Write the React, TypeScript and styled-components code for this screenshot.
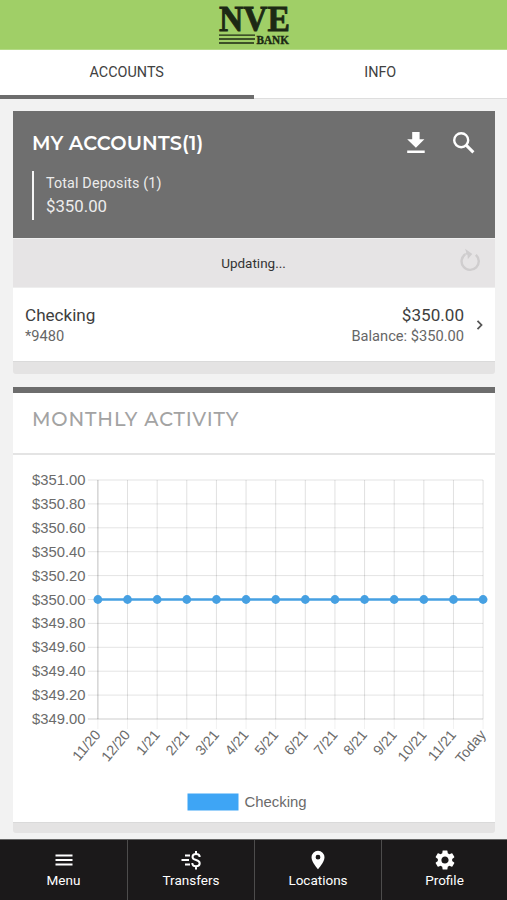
import React from "react";
import styled, { createGlobalStyle } from "styled-components";

const GlobalStyle = createGlobalStyle`
  * { box-sizing: border-box; }
  body { margin: 0; background: #f2f2f2; font-family: Roboto, sans-serif; color: #444; }
`;

const Page = styled.div`
  width: 507px;
  height: 900px;
  overflow: hidden;
  display: flex;
  flex-direction: column;
`;

const Brand = styled.header`
  height: 50px;
  flex: none;
  background: #a0cf67;
  border-bottom: 1px solid #b4da86;
  display: flex;
  justify-content: center;
`;

const LogoMark = styled.svg`
  overflow: visible;
  font-family: "Liberation Serif", serif;
  font-weight: 700;
`;

const Tabs = styled.nav`
  height: 49px;
  flex: none;
  display: flex;
  background: #fff;
`;

const Tab = styled.button<{ $active?: boolean }>`
  flex: 1;
  border: 0;
  padding: 0 0 ${(p) => (p.$active ? 0 : 3)}px;
  background: none;
  border-bottom: ${(p) => (p.$active ? "4px solid #6d6d6d" : "1px solid #dedede")};
  font: 400 14.4px Roboto, sans-serif;
  color: #414141;
`;

const Content = styled.main`
  flex: 1;
  padding: 12px 12px 0 13px;
`;

const Card = styled.section`
  display: flex;
  flex-direction: column;
`;

const Summary = styled.div`
  height: 127px;
  background: #6f6f6f;
  color: #fff;
  padding: 19px 19px 0;
`;

const SummaryTop = styled.div`
  display: flex;
  align-items: center;
  justify-content: space-between;
  height: 26px;
`;

const Title = styled.h2<{ $muted?: boolean }>`
  margin: 0;
  font: ${(p) => (p.$muted ? 500 : 600)} 19.4px/26px Montserrat, Inter, sans-serif;
  letter-spacing: ${(p) => (p.$muted ? "0.85px" : "0.15px")};
  color: ${(p) => (p.$muted ? "#a3a3a3" : "#fff")};
  white-space: nowrap;
`;

const Actions = styled.div`
  display: flex;
  gap: 20px;
  margin-right: -3px;
`;

const Deposits = styled.div`
  margin-top: 15px;
  height: 49px;
  border-left: 2.5px solid #f5f5f5;
  padding: 1px 0 0 12px;
`;

const DepositLabel = styled.div`
  font-size: 14.3px;
  line-height: 23px;
  letter-spacing: 0.15px;
  color: #ececec;
`;

const DepositValue = styled.div`
  font-size: 16.8px;
  line-height: 22px;
  color: #ececec;
`;

const Status = styled.div`
  height: 50px;
  background: #e6e4e5;
  display: grid;
  grid-template-columns: 50px 1fr 50px;
  align-items: center;
  justify-items: center;
  font-size: 13.5px;
  border-top: 1px solid #f0f0f0;
  border-bottom: 1px solid #eee;
  color: #333;
`;

const StatusText = styled.span`
  grid-column: 2;
  padding-right: 1px;
`;

const RefreshIcon = styled.svg`
  margin: -4px 0 0 -1px;
`;

const Account = styled.div`
  height: 73px;
  background: #fff;
  display: flex;
  align-items: flex-start;
  padding: 17px 10px 0 12px;
`;

const Lines = styled.div<{ $end?: boolean }>`
  margin-left: ${(p) => (p.$end ? "auto" : 0)};
  text-align: ${(p) => (p.$end ? "right" : "left")};
`;

const Primary = styled.div`
  font-size: 17.1px;
  line-height: 21px;
  color: #3e3e3e;
`;

const Secondary = styled.div`
  font-size: 14.65px;
  line-height: 21px;
  color: #666;
`;

const Chevron = styled.svg`
  margin: 14px 0 0 10px;
`;

const Foot = styled.div<{ $height: number }>`
  height: ${(p) => p.$height}px;
  background: #e4e3e3;
  border-top: 1px solid #dadada;
  border-radius: 0 0 3px 3px;
`;

const ActivityCard = styled(Card)`
  margin-top: 13px;
  border-top: 6px solid #6d6d6d;
`;

const ActivityHead = styled.div`
  height: 62px;
  background: #fff;
  border-bottom: 2px solid #e4e4e4;
  padding: 13px 19px 0;
`;

const Chart = styled.svg`
  display: block;
  background: #fff;
  font-family: "Liberation Sans", sans-serif;
`;

const BottomNav = styled.nav`
  height: 61px;
  flex: none;
  display: grid;
  grid-template-columns: 128px 127px 127px 125px;
  background: #1b191a;
  border-top: 1px solid #666;
`;

const NavItem = styled.button`
  border: 0;
  padding: 9px 0 0;
  background: none;
  color: #fff;
  font: 400 13.5px/17px Roboto, sans-serif;
  display: flex;
  flex-direction: column;
  align-items: center;
  gap: 1px;
  border-right: 1px solid #4d4c4c;
  &:last-child { border-right: 0; }
`;

const months = ["11/20", "12/20", "1/21", "2/21", "3/21", "4/21", "5/21", "6/21", "7/21", "8/21", "9/21", "10/21", "11/21", "Today"];
const amounts = ["$351.00", "$350.80", "$350.60", "$350.40", "$350.20", "$350.00", "$349.80", "$349.60", "$349.40", "$349.20", "$349.00"];
const left = 84.9;
const top = 25;
const columnStep = 29.63;
const rowStep = 23.9;
const bottom = top + rowStep * 10;
const right = left + columnStep * 13;

function ActivityChart() {
  const middle = top + rowStep * 5;
  return (
    <Chart width="482" height="367" viewBox="0 0 482 367">
      {amounts.map((amount, i) => {
        const y = top + i * rowStep;
        return (
          <g key={amount}>
            <line x1={left - 10} x2={right} y1={y} y2={y} stroke="#000" strokeOpacity={i === 10 ? 0.2 : 0.11} />
            <text x="72.6" y={y + 5} textAnchor="end" fontSize="14.8" fill="#6b6b6b">{amount}</text>
          </g>
        );
      })}
      {months.map((month, i) => {
        const x = left + i * columnStep;
        return (
          <g key={month}>
            <line x1={x} x2={x} y1={top} y2={bottom} stroke="#000" strokeOpacity={i === 0 ? 0.25 : 0.12} />
            <line x1={x} x2={x} y1={bottom} y2={bottom + 10} stroke="#000" strokeOpacity="0.06" />
            <text transform={`translate(${x - 0.8} ${bottom + 12.5}) rotate(-50)`} y="5.5" textAnchor="end" fontSize="14.3" fill="#6b6b6b">{month}</text>
          </g>
        );
      })}
      <line x1={left} x2={right} y1={middle} y2={middle} stroke="#46a0e2" strokeWidth="2.5" />
      {months.map((month, i) => (
        <circle key={month} cx={left + i * columnStep} cy={middle} r="4.4" fill="#46a0e2" />
      ))}
      <rect x="174.5" y="338.5" width="51" height="17" fill="#3ea5f5" />
      <text x="231.5" y="352" fontSize="14.9" fill="#6b6b6b">Checking</text>
    </Chart>
  );
}

function Logo() {
  return (
    <LogoMark width="76" height="49" viewBox="0 0 76 49" fill="#1c2914" stroke="#1c2914">
      <text x="3" y="31" fontSize="36" textLength="71" lengthAdjust="spacingAndGlyphs" strokeWidth="0.9">NVE</text>
      <text x="40.5" y="43.7" fontSize="12.5" textLength="32.5" lengthAdjust="spacingAndGlyphs" strokeWidth="0.4">BANK</text>
      <path d="M3 34.5h36v1.3H3zM3 38.3h36v1.4H3zM3 42.3h35v1.5H3z" stroke="none" />
    </LogoMark>
  );
}

export default function App() {
  return (
    <>
      <GlobalStyle />
      <Page>
        <Brand><Logo /></Brand>
        <Tabs>
          <Tab $active>ACCOUNTS</Tab>
          <Tab>INFO</Tab>
        </Tabs>
        <Content>
          <Card>
            <Summary>
              <SummaryTop>
                <Title>MY ACCOUNTS(1)</Title>
                <Actions>
                  <svg width="28" height="28" viewBox="2 0 28 28" fill="#fff">
                    <path d="M11.2 3h7.4v7.2h4.8l-8.5 8.5-8.7-8.5h5zM6.2 21.4h17.5V24H6.2z" />
                  </svg>
                  <svg width="28" height="28" viewBox="2 0 28 28" fill="none" stroke="#fff">
                    <circle cx="12.2" cy="11.2" r="7" strokeWidth="2.4" />
                    <path d="m17.4 16.4 7 7" strokeWidth="3" />
                  </svg>
                </Actions>
              </SummaryTop>
              <Deposits>
                <DepositLabel>Total Deposits (1)</DepositLabel>
                <DepositValue>$350.00</DepositValue>
              </Deposits>
            </Summary>
            <Status>
              <StatusText>Updating...</StatusText>
              <RefreshIcon width="24" height="26" viewBox="0 0 24 26" fill="none" stroke="#cfcdce">
                <path d="M17.8 6.8A8.6 8.6 0 1 1 7.2 6.3" strokeWidth="2.4" />
                <path d="m7.1.8 7.2 5.1-4.5 5.3-.3-4.4-3.2-.4 2-1.8z" fill="#cfcdce" stroke="none" />
              </RefreshIcon>
            </Status>
            <Account>
              <Lines>
                <Primary>Checking</Primary>
                <Secondary>*9480</Secondary>
              </Lines>
              <Lines $end>
                <Primary>$350.00</Primary>
                <Secondary>Balance: $350.00</Secondary>
              </Lines>
              <Chevron width="11" height="12" viewBox="0 0 11 12" fill="none" stroke="#555" strokeWidth="1.8">
                <path d="m3.5 1.8 4 4.2-4 4.2" />
              </Chevron>
            </Account>
            <Foot $height={13} />
          </Card>
          <ActivityCard>
            <ActivityHead><Title $muted>MONTHLY ACTIVITY</Title></ActivityHead>
            <ActivityChart />
            <Foot $height={11} />
          </ActivityCard>
        </Content>
        <BottomNav>
          <NavItem>
            <svg width="22" height="22" viewBox="0 0 22 22" stroke="#fff" strokeWidth="2"><path d="M2.5 6.5h17M2.5 11h17M2.5 15.5h17" /></svg>
            Menu
          </NavItem>
          <NavItem>
            <svg width="22" height="22" viewBox="0 0 22 22" fill="none" stroke="#fff" strokeWidth="2">
              <path d="M5 6.5h5M1.500 11h7.500M5 15.500h5M16 2v3M16 17v3.500M19.700 8c0-2-1.500-3.100-3.700-3.100S12.500 6 12.500 7.900C12.500 12 19.700 10 19.700 14.200c0 2-1.500 3.100-3.700 3.100s-3.700-1.100-3.700-3.200" />
            </svg>
            Transfers
          </NavItem>
          <NavItem>
            <svg width="22" height="22" viewBox="0 0 22 22" fill="#fff" fillRule="evenodd">
              <path d="M11 1.8a6.5 6.5 0 0 0-6.5 6.5C4.5 13.1 11 20.3 11 20.3s6.5-7.2 6.5-12A6.5 6.5 0 0 0 11 1.8zm0 8.8a2.4 2.4 0 1 1 0-4.8 2.4 2.4 0 0 1 0 4.8z" />
            </svg>
            Locations
          </NavItem>
          <NavItem>
            <svg width="22" height="22" viewBox="1 1 22 22" fill="#fff">
              <path d="M19.14 12.94c.04-.3.06-.61.06-.94 0-.32-.02-.64-.07-.94l2.03-1.58a.49.49 0 0 0 .12-.61l-1.92-3.32a.488.488 0 0 0-.59-.22l-2.39.96c-.5-.38-1.03-.7-1.62-.94l-.36-2.54a.484.484 0 0 0-.48-.41h-3.84c-.24 0-.43.17-.47.41l-.36 2.54c-.59.24-1.13.57-1.62.94l-2.39-.96c-.22-.08-.47 0-.59.22L2.74 8.87c-.12.21-.08.47.12.61l2.03 1.58c-.05.3-.09.63-.09.94s.02.64.07.94l-2.03 1.58a.49.49 0 0 0-.12.61l1.92 3.32c.12.22.37.29.59.22l2.39-.96c.5.38 1.03.7 1.62.94l.36 2.54c.05.24.24.41.48.41h3.84c.24 0 .44-.17.47-.41l.36-2.54c.59-.24 1.13-.56 1.62-.94l2.39.96c.22.08.47 0 .59-.22l1.92-3.32c.12-.22.07-.47-.12-.61l-2.01-1.58zM12 15.6A3.6 3.6 0 0 1 8.4 12c0-1.98 1.62-3.6 3.6-3.6s3.6 1.62 3.6 3.6-1.62 3.6-3.6 3.6z" />
            </svg>
            Profile
          </NavItem>
        </BottomNav>
      </Page>
    </>
  );
}
